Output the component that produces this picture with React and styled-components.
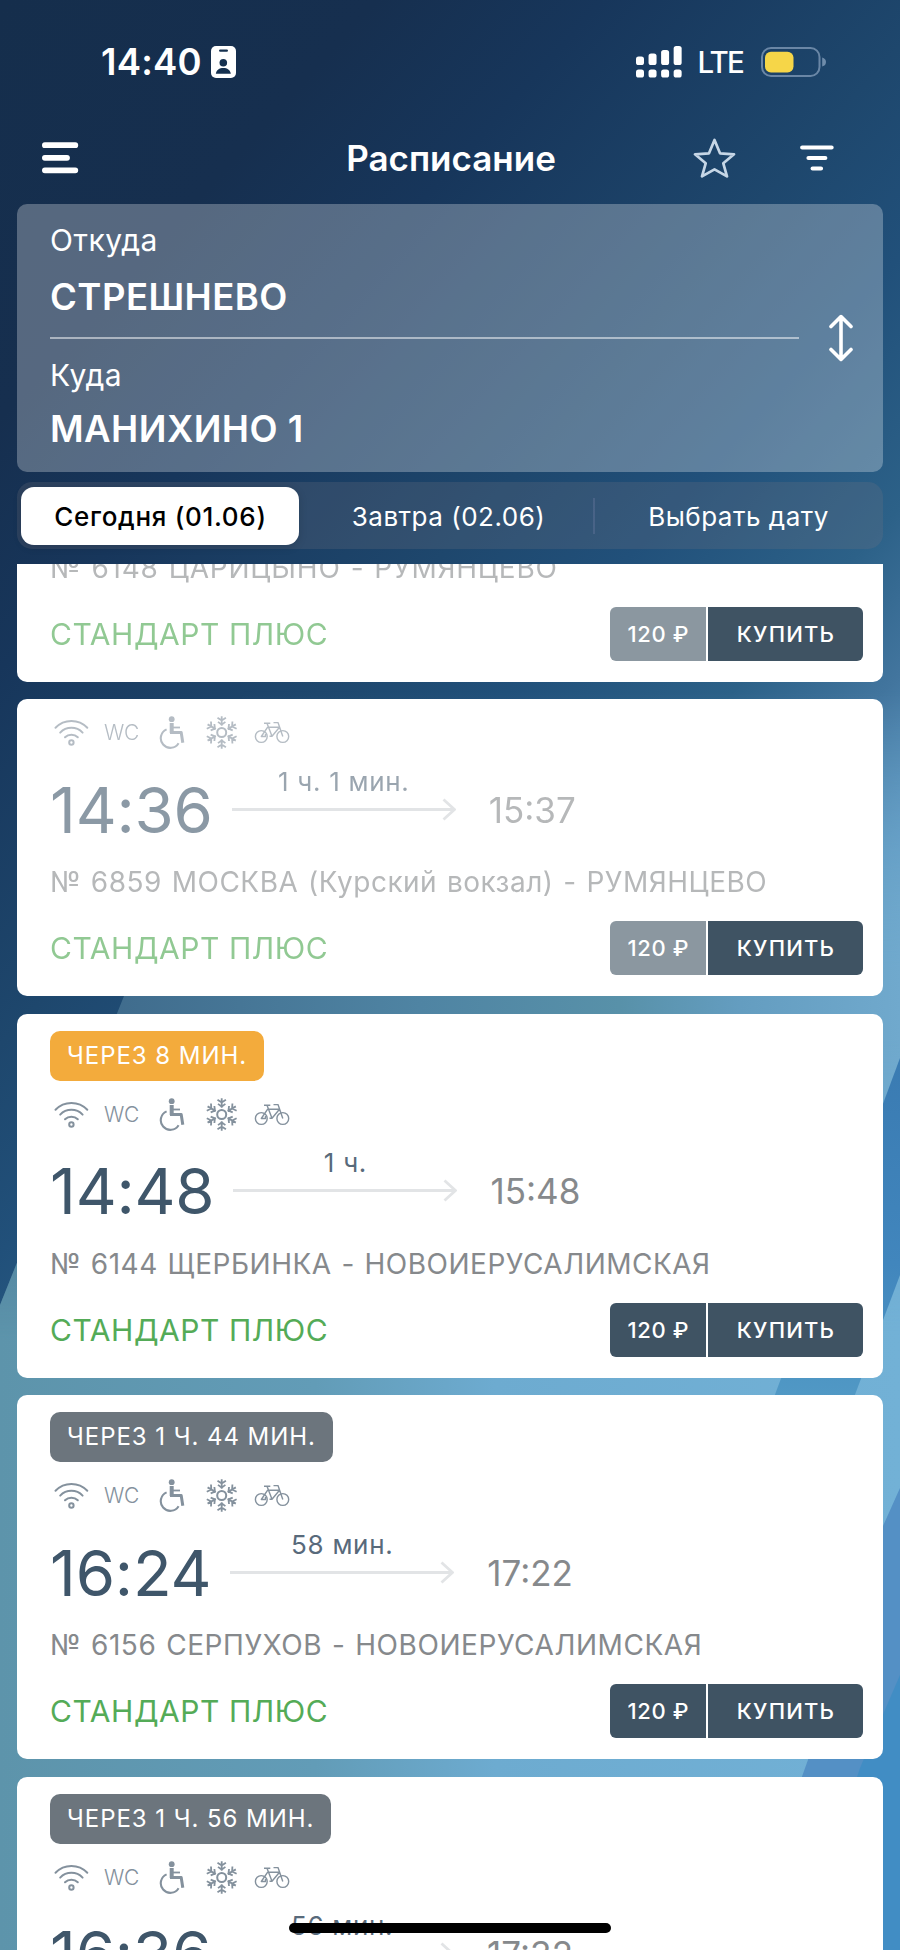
import React from "react";
import styled, { createGlobalStyle } from "styled-components";

const GlobalStyle = createGlobalStyle`
  * { box-sizing: border-box; }
  body {
    margin: 0;
    font-family: Inter, "Liberation Sans", sans-serif;
    color: #fff;
  }
  svg { display: block; flex: none; }
`;

const Screen = styled.div`
  position: relative;
  isolation: isolate;
  display: flex;
  flex-direction: column;
  width: 900px;
  height: 1950px;
  overflow: hidden;
  background: #15304f;
`;

const BackdropSvg = styled.svg`
  position: absolute;
  inset: 0;
  z-index: -1;
`;

const StatusBar = styled.div`
  display: flex;
  align-items: center;
  justify-content: space-between;
  height: 123px;
  padding: 0 73px 0 101px;
`;

const StatusGroup = styled.div`
  display: flex;
  align-items: center;
  gap: ${(p) => p.$gap}px;
`;

const Clock = styled.span`
  font-size: 36.5px;
  font-weight: 580;
  letter-spacing: 0.2px;
`;

const Network = styled.span`
  width: 43px;
  margin-right: 5px;
  font-size: 29.5px;
  font-weight: 500;
  letter-spacing: -1.8px;
`;

const NavBar = styled.header`
  display: grid;
  grid-template-columns: 1fr auto 1fr;
  align-items: center;
  height: 70px;
  margin-bottom: 11px;
  padding: 0 66px 0 42px;
`;

const Title = styled.h1`
  margin: 0;
  padding-left: 26px;
  font-size: 35px;
  font-weight: 580;
  letter-spacing: 0;
`;

const NavActions = styled.div`
  display: flex;
  align-items: center;
  justify-content: flex-end;
  gap: 64.5px;
`;

const SearchPanel = styled.section`
  display: flex;
  align-items: center;
  height: 268px;
  margin: 0 17px;
  padding: 0 30px 0 33px;
  border-radius: 10px;
  background: rgba(255, 255, 255, 0.28);
`;

const Stations = styled.div`
  display: flex;
  flex-direction: column;
  width: 749px;
  height: 236px;
  margin-right: 30px;
`;

const Station = styled.div`
  display: flex;
  flex-direction: column;
  gap: ${(p) => p.$gap}px;
  line-height: 40px;
`;

const StationLabel = styled.span`
  font-size: 30px;
  letter-spacing: 0.5px;
`;

const StationName = styled.span`
  font-size: 36.5px;
  font-weight: 590;
  letter-spacing: 0.45px;
`;

const Divider = styled.hr`
  width: 100%;
  height: 2px;
  margin: 20px 0 16px;
  border: 0;
  background: rgba(255, 255, 255, 0.5);
`;

const DayTabs = styled.nav`
  display: grid;
  grid-template-columns: 286px 290px 290px;
  height: 67px;
  margin: 10px 17px 15px;
  border-radius: 15px;
  background: rgba(118, 118, 128, 0.24);
`;

const DayTab = styled.button`
  display: flex;
  align-items: center;
  justify-content: center;
  margin: 5px 4px 4px;
  padding: 0 0 0 1px;
  border: 0;
  border-radius: 13px;
  background: ${(p) => (p.$active ? "#fff" : "transparent")};
  box-shadow: ${(p) => (p.$active ? "0 2px 8px rgba(0, 0, 0, 0.15)" : "none")};
  color: ${(p) => (p.$active ? "#000" : "#fff")};
  font-family: inherit;
  font-size: 26px;
  font-weight: ${(p) => (p.$active ? 500 : 400)};
  letter-spacing: ${(p) => (p.$active ? 0.7 : 0.5)}px;
`;

const TabCell = styled.div`
  display: grid;
  background: ${(p) =>
    p.$separated
      ? "linear-gradient(rgba(120, 130, 170, 0.3), rgba(120, 130, 170, 0.3)) left center / 2px 36px no-repeat"
      : "none"};
`;

const TrainList = styled.main`
  display: flex;
  flex-direction: column;
  gap: 17.5px;
  flex: 1;
  min-height: 0;
  overflow: hidden;
  padding: 0 17px;
`;

const Card = styled.article`
  display: flex;
  flex-direction: column;
  flex: none;
  align-items: flex-start;
  min-height: ${(p) => (p.$upcoming ? 364 : 0)}px;
  margin-top: ${(p) => (p.$scrolled ? "-41px" : 0)};
  padding: 17px 20.5px 21px 33px;
  border-radius: 10px;
  background: #fff;
  --fade: ${(p) => (p.$departed ? 0.6 : 1)};
`;

const Countdown = styled.span`
  height: 50px;
  margin-bottom: 17px;
  padding: 0 17px;
  border-radius: 10px;
  background: ${(p) => (p.$soon ? "#f3ab3c" : "#6c757d")};
  font-size: 24px;
  line-height: 50px;
  letter-spacing: 0.95px;
  white-space: nowrap;
`;

const Amenities = styled.div`
  display: flex;
  align-items: center;
  gap: 7px;
  height: 33px;
  margin-bottom: 15.5px;
  color: #84919d;
  opacity: var(--fade);
`;

const AmenityText = styled.span`
  width: 43px;
  text-align: center;
  font-size: 21px;
  font-weight: 300;
  letter-spacing: -0.3px;
`;

const Route = styled.div`
  display: flex;
  align-items: center;
  height: 90px;
`;

const Departure = styled.span`
  color: #3f566a;
  font-size: 63.5px;
  line-height: 90px;
  letter-spacing: -0.2px;
  opacity: var(--fade);
`;

const Travel = styled.div`
  display: flex;
  flex-direction: column;
  align-items: center;
  width: 224px;
  height: 90px;
  margin: 0 33px 0 19px;
`;

const Duration = styled.span`
  margin-top: 1px;
  color: #586a7b;
  font-size: 26px;
  line-height: 32px;
  letter-spacing: 0.7px;
  opacity: var(--fade);
`;

const Arrival = styled.span`
  color: #86898c;
  font-size: 35px;
  opacity: var(--fade);
`;

const TrainName = styled.p`
  height: 40px;
  margin: 7.5px 0 19px;
  color: #86898c;
  font-size: 28px;
  line-height: 40px;
  letter-spacing: ${(p) => p.$tracking ?? 0.5}px;
  word-spacing: 1.4px;
  white-space: nowrap;
  opacity: var(--fade);
`;

const CardFooter = styled.div`
  display: flex;
  align-items: center;
  justify-content: space-between;
  align-self: stretch;
  height: 54px;
`;

const TrainClass = styled.span`
  color: #54ab57;
  font-size: 30px;
  font-weight: 440;
  letter-spacing: 0.55px;
  opacity: calc(var(--fade) + 0.04);
`;

const BuyGroup = styled.div`
  display: flex;
  gap: 2px;
  overflow: hidden;
  height: 54px;
  border-radius: 6px;
  font-size: 22px;
  font-weight: 500;
  line-height: 54px;
  text-align: center;
`;

const Price = styled.span`
  width: 95.5px;
  padding-left: 1px;
  background: ${(p) => (p.$departed ? "#8b97a0" : "#3f5363")};
  letter-spacing: 0.6px;
`;

const BuyButton = styled.button`
  width: 155px;
  padding: 0 0 0 2px;
  border: 0;
  background: #3f5363;
  color: #fff;
  font: inherit;
  letter-spacing: 1.2px;
`;

const HomeIndicator = styled.div`
  position: absolute;
  bottom: 17px;
  left: 289px;
  width: 322px;
  height: 10.5px;
  border-radius: 6px;
  background: #000;
`;

function Backdrop() {
  return (
    <BackdropSvg width="900" height="1950" viewBox="0 0 900 1950">
      <defs>
        <linearGradient id="night" gradientUnits="userSpaceOnUse" x1="0" y1="0" x2="1040" y2="937">
          <stop offset="0" stopColor="#152e4c" />
          <stop offset="0.2" stopColor="#162f4f" />
          <stop offset="0.32" stopColor="#17365b" />
          <stop offset="0.5" stopColor="#1e476d" />
          <stop offset="0.6" stopColor="#21507a" />
          <stop offset="0.72" stopColor="#2c6188" />
          <stop offset="0.8" stopColor="#42759e" />
          <stop offset="0.88" stopColor="#5b95bf" />
          <stop offset="0.94" stopColor="#6ca6ca" />
          <stop offset="1" stopColor="#6fa9cd" />
        </linearGradient>
        <linearGradient id="haze" gradientUnits="userSpaceOnUse" x1="100" y1="0" x2="900" y2="0">
          <stop offset="0" stopColor="#3f6b8c" />
          <stop offset="0.4" stopColor="#4f84a3" />
          <stop offset="0.65" stopColor="#5891a9" />
          <stop offset="0.8" stopColor="#649dc0" />
          <stop offset="1" stopColor="#70a9cd" />
        </linearGradient>
        <linearGradient id="water" gradientUnits="userSpaceOnUse" x1="0" y1="0" x2="900" y2="0">
          <stop offset="0" stopColor="#5d94ab" />
          <stop offset="0.35" stopColor="#629cb7" />
          <stop offset="0.55" stopColor="#6dabd0" />
          <stop offset="1" stopColor="#72b1d6" />
        </linearGradient>
        <linearGradient id="fadeA" gradientUnits="userSpaceOnUse" x1="0" y1="690" x2="0" y2="1000">
          <stop offset="0" stopColor="#fff" stopOpacity="0" />
          <stop offset="0.9" stopColor="#fff" />
        </linearGradient>
        <linearGradient id="fadeB" gradientUnits="userSpaceOnUse" x1="0" y1="1040" x2="0" y2="1340">
          <stop offset="0" stopColor="#fff" stopOpacity="0" />
          <stop offset="1" stopColor="#fff" />
        </linearGradient>
        <mask id="maskA"><rect width="900" height="1950" fill="url(#fadeA)" /></mask>
        <mask id="maskB"><rect width="900" height="1950" fill="url(#fadeB)" /></mask>
        <linearGradient id="band" gradientUnits="userSpaceOnUse" x1="0" y1="1060" x2="0" y2="1400">
          <stop offset="0" stopColor="#3a7bb2" />
          <stop offset="0.6" stopColor="#4186bd" />
          <stop offset="1" stopColor="#5199c5" />
        </linearGradient>
      </defs>
      <rect width="900" height="1950" fill="url(#night)" />
      <path d="M0 1305L124 996L245 690H900V1950H0Z" fill="url(#haze)" mask="url(#maskA)" />
      <path d="M0 1305L124 996H900V1950H0Z" fill="url(#water)" mask="url(#maskB)" />
      <path d="M900 1058L773 1400H853L900 1275Z" fill="url(#band)" />
      <path d="M900 1488L883 1526L809 1757L740 1950H900Z" fill="#5490c5" />
      <path d="M900 1675L860 1768L800 1950H900Z" fill="#418dc4" />
    </BackdropSvg>
  );
}

function ProfileBadge() {
  return (
    <svg width="25" height="32" viewBox="0 0 25 32">
      <rect width="25" height="32" rx="5" fill="#fff" />
      <rect x="8" y="3.4" width="9" height="2.4" rx="1.2" fill="#15304f" />
      <circle cx="12.3" cy="16.7" r="3.8" fill="#15304f" />
      <path d="M4.8 27.7C5.3 24 8.4 22 12.3 22S19.3 24 19.8 27.7Z" fill="#15304f" />
    </svg>
  );
}

function Signal() {
  const bars = [10.5, 7.5, 4, 0];
  return (
    <svg width="47" height="32" viewBox="0 0 47 32" fill="#fff">
      {bars.map((y, i) => (
        <g key={y}>
          <rect x={i * 12.55} y={y} width="8" height={19 - y} rx="2.6" />
          <rect x={i * 12.55} y="23.5" width="8" height="8" rx="2.6" />
        </g>
      ))}
    </svg>
  );
}

function Battery() {
  return (
    <svg width="67" height="30" viewBox="0 0 67 30">
      <rect x="2" y="1" width="57.5" height="28" rx="9" fill="none" stroke="#8ba4c0" strokeOpacity="0.7" strokeWidth="2" />
      <rect x="5" y="4.8" width="28.5" height="20.6" rx="6" fill="#f6d648" />
      <path d="M62.2 10.5Q66 11.5 66 15T62.2 19.5Z" fill="#8ba4c0" fillOpacity="0.75" />
    </svg>
  );
}

function MenuIcon() {
  return (
    <svg width="37" height="32" viewBox="0 0 37 32" fill="none" stroke="#fff" strokeWidth="5.8" strokeLinecap="round">
      <path d="M2.9 3.2H33.3M2.9 15.8H25M2.9 28.3H33.3" />
    </svg>
  );
}

function StarIcon() {
  return (
    <svg width="43" height="40" viewBox="0 0 43 40" fill="none" stroke="#c6d6e6" strokeWidth="2.7" strokeLinejoin="round">
      <path d="M21.5 2L27 15.3L41 16.3L30.3 25.3L34 38.4L21.5 31.4L9 38.4L12.7 25.3L2 16.3L16 15.3Z" />
    </svg>
  );
}

function FilterIcon() {
  return (
    <svg width="34" height="26" viewBox="0 0 34 26" fill="none" stroke="#fff" strokeWidth="4.2" strokeLinecap="round">
      <path d="M2.2 2.5H31.6M8.5 13H25.3M12.6 23.5H21" />
    </svg>
  );
}

function SwapIcon() {
  return (
    <svg width="24" height="48" viewBox="0 0 24 48" fill="none" stroke="#fff" strokeWidth="3.6" strokeLinecap="round" strokeLinejoin="round">
      <path d="M12 3V45M2 12.6L12 2.6L22 12.6M2 35.4L12 45.4L22 35.4" />
    </svg>
  );
}

function WifiIcon() {
  return (
    <svg width="43" height="33" viewBox="0 0 43 33" fill="none" stroke="currentColor" strokeWidth="2" strokeLinecap="round">
      <path d="M5.5 11.8A22 22 0 0 1 37.3 11.8M10.2 16.6A15.5 15.5 0 0 1 32.6 16.6M15 21.3A9 9 0 0 1 27.8 21.3" />
      <circle cx="21.4" cy="26.5" r="2.2" />
    </svg>
  );
}

function WheelchairIcon() {
  return (
    <svg width="43" height="33" viewBox="0 0 43 33" fill="none" stroke="currentColor" strokeWidth="2.3">
      <circle cx="21.7" cy="3.2" r="2.9" fill="currentColor" stroke="none" />
      <path d="M21.7 7V17" strokeWidth="4" />
      <path d="M21.7 11.5H30" strokeWidth="1.8" />
      <path d="M20 16.4H31.2L32.8 26.8" strokeWidth="3" strokeLinejoin="round" />
      <path d="M16.6 13.4A9.6 9.6 0 1 0 28.6 27.2" strokeWidth="2.1" />
    </svg>
  );
}

function SnowflakeIcon() {
  return (
    <svg width="43" height="33" viewBox="0 0 43 33" fill="none" stroke="currentColor" strokeWidth="1.8">
      <circle cx="21.7" cy="16.5" r="4.5" strokeWidth="2" />
      {[0, 60, 120, 180, 240, 300].map((a) => (
        <path key={a} transform={`translate(21.7 16.5) rotate(${a})`} d="M0 -6.8V-16.3M-4.2 -14.8L0 -12L4.2 -14.8M-3.7 -10.6L0 -7.8L3.7 -10.6" />
      ))}
    </svg>
  );
}

function BikeIcon() {
  return (
    <svg width="43" height="33" viewBox="0 0 43 33" fill="none" stroke="currentColor" strokeWidth="1.4" strokeLinejoin="round">
      <circle cx="11.3" cy="20.5" r="5.9" />
      <circle cx="32.8" cy="20.5" r="5.9" />
      <path d="M14 7.3H20.3M17 7.3L22 20.3L29.5 11.3H17.5L11.3 20.5H15.5V18M32.8 20.5L28 6.6H23.5M22 20.3H19.5" />
    </svg>
  );
}

function LongArrow() {
  return (
    <svg width="224" height="24" viewBox="0 0 224 24" fill="none" stroke="#e2e4e6" strokeWidth="2.8">
      <path d="M0 11.5H222M211.5 1.5L222.5 11.5L211.5 21.5" />
    </svg>
  );
}

const trains = [
  { dep: "14:28", arr: "15:29", duration: "1 ч. 1 мин.", name: "№ 6148 ЦАРИЦЫНО - РУМЯНЦЕВО", tracking: 0.78, departed: true, scrolled: true },
  { dep: "14:36", arr: "15:37", duration: "1 ч. 1 мин.", name: "№ 6859 МОСКВА (Курский вокзал) - РУМЯНЦЕВО", departed: true },
  { dep: "14:48", arr: "15:48", duration: "1 ч.", name: "№ 6144 ЩЕРБИНКА - НОВОИЕРУСАЛИМСКАЯ", countdown: "ЧЕРЕЗ 8 МИН.", soon: true },
  { dep: "16:24", arr: "17:22", duration: "58 мин.", name: "№ 6156 СЕРПУХОВ - НОВОИЕРУСАЛИМСКАЯ", tracking: 0.56, countdown: "ЧЕРЕЗ 1 Ч. 44 МИН." },
  { dep: "16:36", arr: "17:32", duration: "56 мин.", countdown: "ЧЕРЕЗ 1 Ч. 56 МИН." },
];

function TrainCard({ train }) {
  return (
    <Card $departed={train.departed} $scrolled={train.scrolled} $upcoming={Boolean(train.countdown)}>
      {train.countdown && <Countdown $soon={train.soon}>{train.countdown}</Countdown>}
      {!train.scrolled && (
        <>
          <Amenities>
            <WifiIcon />
            <AmenityText>WC</AmenityText>
            <WheelchairIcon />
            <SnowflakeIcon />
            <BikeIcon />
          </Amenities>
          <Route>
            <Departure>{train.dep}</Departure>
            <Travel>
              <Duration>{train.duration}</Duration>
              <LongArrow />
            </Travel>
            <Arrival>{train.arr}</Arrival>
          </Route>
        </>
      )}
      {train.name && (
        <>
          <TrainName $tracking={train.tracking}>{train.name}</TrainName>
          <CardFooter>
            <TrainClass>СТАНДАРТ ПЛЮС</TrainClass>
            <BuyGroup>
              <Price $departed={train.departed}>120 ₽</Price>
              <BuyButton>КУПИТЬ</BuyButton>
            </BuyGroup>
          </CardFooter>
        </>
      )}
    </Card>
  );
}

export default function App() {
  return (
    <Screen>
      <GlobalStyle />
      <Backdrop />
      <StatusBar>
        <StatusGroup $gap={9}>
          <Clock>14:40</Clock>
          <ProfileBadge />
        </StatusGroup>
        <StatusGroup $gap={14.5}>
          <Signal />
          <Network>LTE</Network>
          <Battery />
        </StatusGroup>
      </StatusBar>
      <NavBar>
        <MenuIcon />
        <Title>Расписание</Title>
        <NavActions>
          <StarIcon />
          <FilterIcon />
        </NavActions>
      </NavBar>
      <SearchPanel>
        <Stations>
          <Station $gap={16.5}>
            <StationLabel>Откуда</StationLabel>
            <StationName>СТРЕШНЕВО</StationName>
          </Station>
          <Divider />
          <Station $gap={14}>
            <StationLabel>Куда</StationLabel>
            <StationName>МАНИХИНО 1</StationName>
          </Station>
        </Stations>
        <SwapIcon />
      </SearchPanel>
      <DayTabs>
        <TabCell><DayTab $active>Сегодня (01.06)</DayTab></TabCell>
        <TabCell><DayTab>Завтра (02.06)</DayTab></TabCell>
        <TabCell $separated><DayTab>Выбрать дату</DayTab></TabCell>
      </DayTabs>
      <TrainList>
        {trains.map((train) => (
          <TrainCard key={train.dep} train={train} />
        ))}
      </TrainList>
      <HomeIndicator />
    </Screen>
  );
}
